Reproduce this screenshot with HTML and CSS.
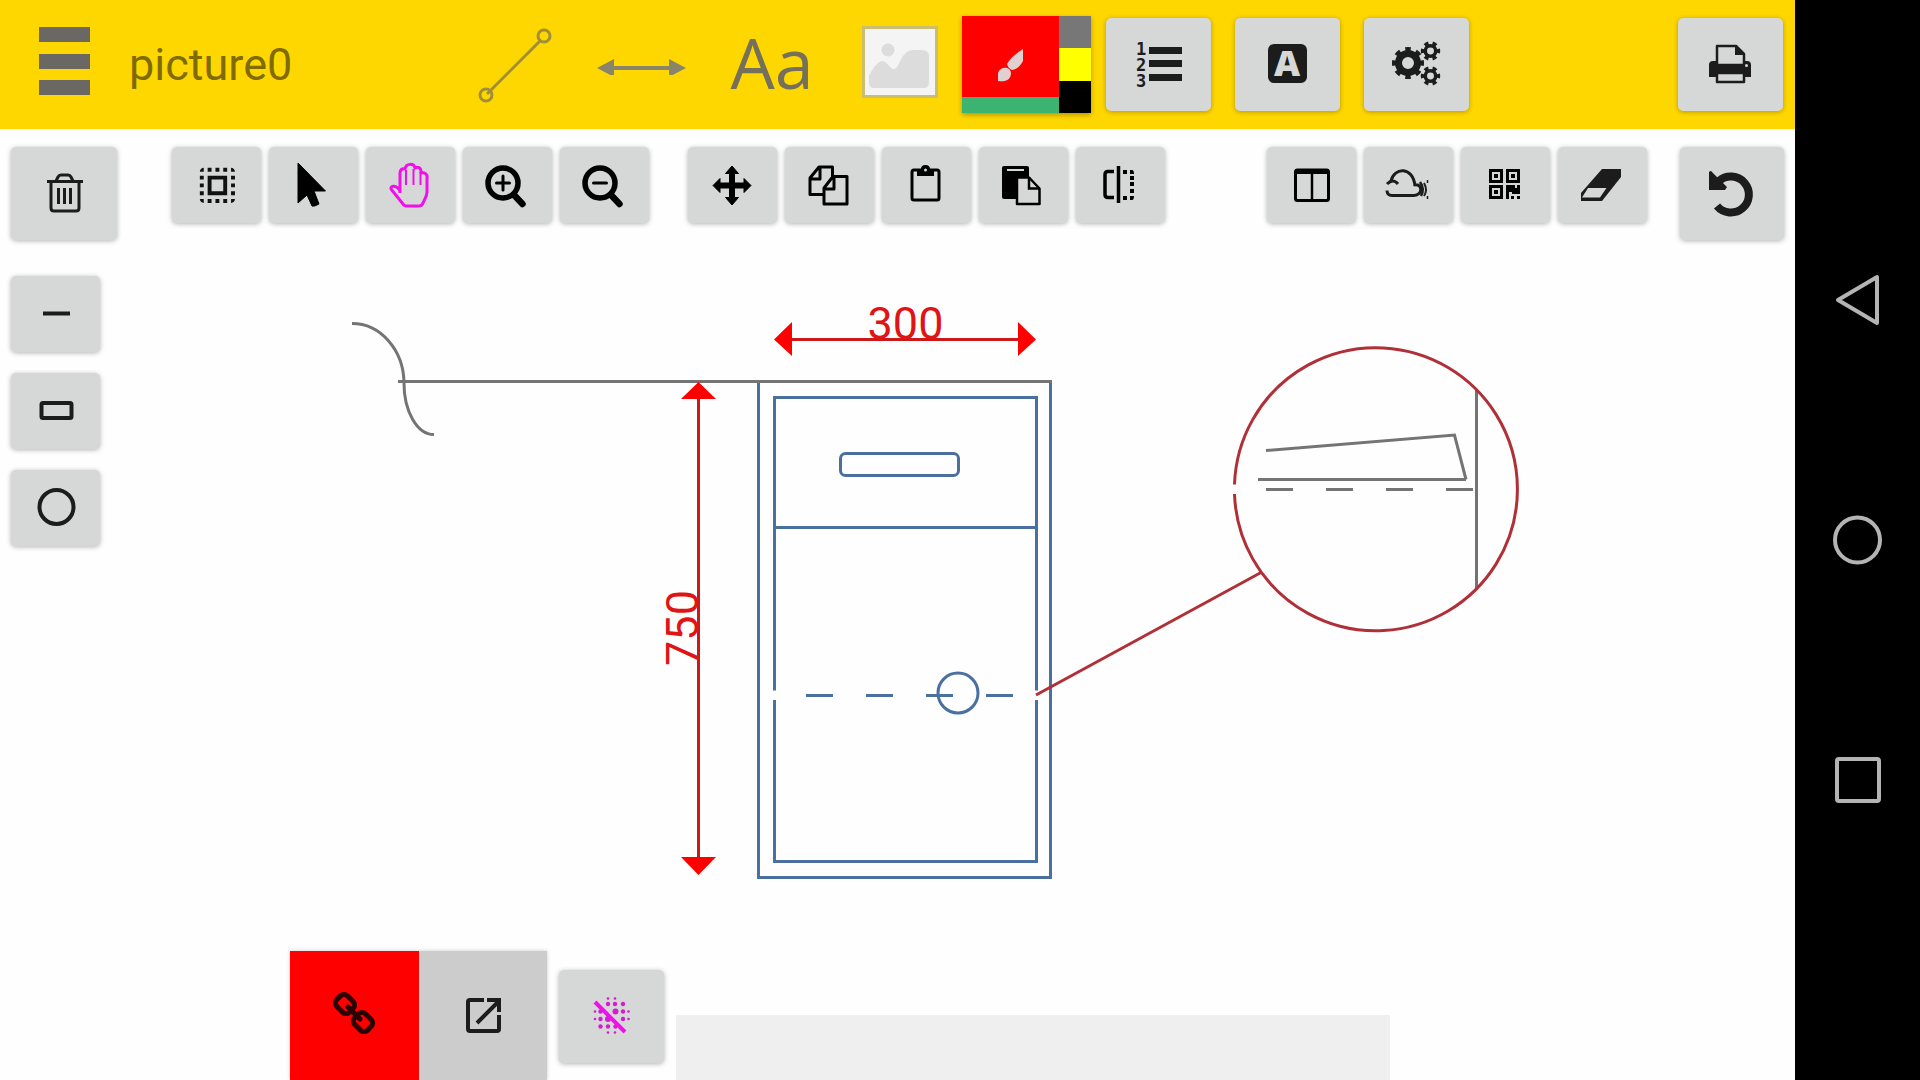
FILE: index.html
```
<!DOCTYPE html>
<html lang="en">
<head>
<meta charset="utf-8">
<title>picture0</title>
<link rel="stylesheet" href="styles.css">
</head>
<body>
<div class="app">
  <header class="header">
    <button class="plain menu" aria-label="Menu"><svg class="ico" width="52" height="70" viewBox="0 0 52 70"><path fill="#6b6863" d="M0 0h51v15H0zM0 27h51v15H0zM0 53h51v15H0z"/></svg></button>
    <h1 class="title">picture0</h1>
    <div class="modes">
      <button class="plain mode" aria-label="Line"><svg width="80" height="80" viewBox="0 0 80 80" fill="none" stroke="#a08e38" stroke-width="3"><circle cx="70" cy="11" r="6"/><circle cx="12" cy="70" r="6"/><path d="M67 15L13 69"/></svg></button>
      <button class="plain mode" aria-label="Dimension"><svg width="90" height="20" viewBox="0 0 90 20"><g transform="translate(0 3)"><path fill="#8a8468" d="M0 10L17 1v18zM89 10L72 1v18z"/><path stroke="#8a8468" stroke-width="4" d="M14 10h62"/></g></svg></button>
      <button class="plain mode aa">Aa</button>
      <button class="plain mode" aria-label="Image"><svg class="ico" width="80" height="72" viewBox="-4 0 80 72"><rect x="1.500" y="1.500" width="73" height="69" fill="#f4f4f4" stroke="#cbbd72" stroke-width="3"/><circle cx="26" cy="24" r="6.500" fill="#dcdcdc"/><path fill="#dcdcdc" d="M7 50C12 40 16 36 20 35c5 0 8 8 12 8 6 0 6-19 20-19h7q8 0 8 6v26q0 6-5 6H12q-5 0-5-6z"/></svg></button>
    </div>
    <div class="palette">
      <button class="plain brush" aria-label="Brush colour"><svg width="97" height="81" viewBox="0 0 97 81" fill="#e2cfcf"><path d="M61 33V45C58 51 53 54 50 54Q46 52 45 48C49 41 54 38 61 33z"/><path d="M36 65V57C37 53 41 51 45 52Q49 53 49 58C48 64 44 66 36 65z"/></svg></button>
      <div class="swatches"><button class="plain swatch gray" aria-label="Gray"></button><button class="plain swatch yellow" aria-label="Yellow"></button><button class="plain swatch black" aria-label="Black"></button></div>
    </div>
    <div class="actions">
      <button class="btn head" aria-label="Numbering"><svg width="105" height="93" viewBox="0 0 105 93" fill="#1c1c1c"><path d="M43 29h33v7H43zM43 42h33v7H43zM43 56h33v7H43z"/><g class="digits"><text x="30" y="37">1</text><text x="30" y="53">2</text><text x="30" y="69">3</text></g></svg></button>
      <button class="btn head" aria-label="Text style"><svg width="105" height="93" viewBox="0 0 105 93"><rect x="33" y="26" width="39" height="39" rx="6" fill="#1c1c1c"/><text class="letter" x="52" y="58" text-anchor="middle">A</text></svg></button>
      <button class="btn head" aria-label="Settings"><svg width="105" height="93" viewBox="0 0 105 93" fill="none" stroke="#1c1c1c"><circle cx="44" cy="45" r="9.500" stroke-width="7"/><circle cx="44" cy="45" r="13.500" stroke-width="5" pathLength="16" stroke-dasharray="1 1" stroke-dashoffset="0.500"/><circle cx="66.500" cy="33" r="5.200" stroke-width="3.500"/><circle cx="66.500" cy="33" r="7.700" stroke-width="4" pathLength="12" stroke-dasharray="1 1" stroke-dashoffset="0.500"/><circle cx="66.500" cy="58" r="5.200" stroke-width="3.500"/><circle cx="66.500" cy="58" r="7.700" stroke-width="4" pathLength="12" stroke-dasharray="1 1" stroke-dashoffset="0.500"/></svg></button>
    </div>
    <button class="btn head print" aria-label="Print"><svg width="105" height="93" viewBox="0 0 105 93"><path fill="#1c1c1c" d="M35 43h34q4 0 4 4v12H31V47q0-4 4-4z"/><path fill="#d6d8d7" stroke="#1c1c1c" stroke-width="2.500" stroke-linejoin="round" d="M39 47V28h19l8 8v11z"/><path fill="#1c1c1c" d="M57 27l10 10H57z"/><path fill="#d6d8d7" stroke="#1c1c1c" stroke-width="2.500" stroke-linejoin="round" d="M39 55h27v9H39z"/><circle cx="68.500" cy="47.500" r="1.500" fill="#d6d8d7"/></svg></button>
  </header>

  <main class="work">
    <div class="toolbar">
      <button class="btn trash" aria-label="Delete"><svg width="107" height="94" viewBox="0 0 107 94" fill="none" stroke="#1c1c1c" stroke-width="3"><path d="M37 35.500h36"/><path d="M46 35l2-4q1-2 3-2h7q2 0 3 2l2 4"/><path d="M41 36v26q0 3 3 3h22q3 0 3-3V36"/><path d="M48.500 42v16M54.500 42v16M60.500 42v16" stroke-width="3"/></svg></button>
      <div class="group">
        <button class="btn tool" aria-label="Select all"><svg width="90" height="78" viewBox="0 0 90 78"><path transform="translate(23 16) scale(1.950)" fill="#111" d="M3 5h2V3c-1.100 0-2 .9-2 2zm0 8h2v-2H3v2zm4 8h2v-2H7v2zM3 9h2V7H3v2zm10-6h-2v2h2V3zm6 0v2h2c0-1.100-.9-2-2-2zM5 21v-2H3c0 1.100.9 2 2 2zm-2-4h2v-2H3v2zM9 3H7v2h2V3zm2 18h2v-2h-2v2zm8-8h2v-2h-2v2zm0 8c1.100 0 2-.9 2-2h-2v2zm0-12h2V7h-2v2zm0 8h2v-2h-2v2zm-4 4h2v-2h-2v2zm0-16h2V3h-2v2zM7 17h10V7H7v10zm2-8h6v6H9V9z"/></svg></button>
        <button class="btn tool" aria-label="Pointer"><svg width="90" height="78" viewBox="0 0 90 78"><path stroke="#000" stroke-linejoin="round" d="M30 17v40l9-8 5 11q2 1 7-2l-5-13h11.500z"/></svg></button>
        <button class="btn tool" aria-label="Pan"><svg width="90" height="78" viewBox="0 0 90 78" fill="none" stroke="#f010ea" stroke-width="3"><path stroke-linejoin="round" d="M35 47V27c0-3 2-5 5-4 1-6 9-6 10-1 3-2 6 0 6 3v2c3-1 7 1 6 5v14c0 5-3 8-4 11q-1 3-4 3H42q-3 0-4-2L26 43c-1-4 6-4 9 2"/><path stroke-width="2" d="M41 24v15M48.500 23v16M55.500 26v13"/></svg></button>
        <button class="btn tool" aria-label="Zoom in"><svg width="90" height="78" viewBox="0 0 90 78" fill="none" stroke="#000"><circle cx="41" cy="37" r="15" stroke-width="5.500"/><path stroke-width="6.500" stroke-linecap="round" d="M53 50l7.500 8"/><path stroke-width="3" stroke-linecap="round" d="M34.500 37h13M41 30v14"/></svg></button>
        <button class="btn tool" aria-label="Zoom out"><svg width="90" height="78" viewBox="0 0 90 78" fill="none" stroke="#000"><circle cx="41" cy="37" r="15" stroke-width="5.500"/><path stroke-width="6.500" stroke-linecap="round" d="M53 50l7.500 8"/><path stroke-width="3" stroke-linecap="round" d="M34.500 37h13"/></svg></button>
      </div>
      <div class="group second">
        <button class="btn tool" aria-label="Move"><svg width="90" height="78" viewBox="0 0 90 78"><path stroke="#000" stroke-linejoin="round" d="M45 20l6.500 7.500H47.500v9.500H57v-4.500L64 39.500l-7 7V42h-9.500v9.500h4L45 59l-6.500-7.500h4V42H33v4.500l-7-7 7-7V37h9.500v-9.500h-4z"/></svg></button>
        <button class="btn tool" aria-label="Copy"><svg width="90" height="78" viewBox="0 0 90 78" fill="none" stroke="#000" stroke-width="3" stroke-linejoin="round"><path d="M39 48.500H26V32l9-11h13.500v10M36 21v12H26"/><path d="M49 30.500h14V58H40V42zM50 31v12H40"/></svg></button>
        <button class="btn tool" aria-label="Clipboard"><svg width="90" height="78" viewBox="0 0 90 78"><rect x="31" y="24" width="27" height="30" rx="2" fill="none" stroke="#000" stroke-width="3"/><path d="M36 23h4q0-4 4.500-4t4.500 4h4v7H36z"/><circle cx="44.500" cy="24" r="1.500" fill="#d6d8d7"/></svg></button>
        <button class="btn tool" aria-label="Paste"><svg width="90" height="78" viewBox="0 0 90 78"><rect x="24" y="20" width="27" height="33" rx="2"/><path stroke="#d6d8d7" stroke-width="2" d="M29 24h17"/><path fill="#d6d8d7" stroke="#000" stroke-width="2.500" stroke-linejoin="round" d="M39 31.500h12l10.500 11V58H39z"/><path fill="none" stroke="#000" stroke-width="2.500" d="M51 31v11.500h10"/></svg></button>
        <button class="btn tool" aria-label="Mirror"><svg width="90" height="78" viewBox="0 0 90 78"><path fill="none" stroke="#000" stroke-width="3.500" d="M39 25.500h-6q-3 0-3 3v20q0 3 3 3h6M43.500 20v37"/><path d="M48 24h4v4h-4zM55 24h2q2 0 2 4h-4zM55 30h4v4h-4zM55 36h4v4h-4zM55 43h4v4h-4zM48 50h4v4h-4zM55 50h4q0 4-2 4h-2z"/></svg></button>
      </div>
      <div class="group third">
        <button class="btn tool" aria-label="Columns"><svg width="90" height="78" viewBox="0 0 90 78"><rect x="29.500" y="24" width="33" height="30.500" rx="2" fill="none" stroke="#000" stroke-width="3"/><path d="M29 23h34v5H29z"/><path stroke="#000" stroke-width="2.500" d="M46 27v27"/></svg></button>
        <button class="btn tool" aria-label="Cloud"><svg width="90" height="78" viewBox="0 0 90 78" fill="none" stroke="#1c1c1c" stroke-width="3"><path d="M24 38q6-6 11 0M28 35C31 21 50 20 52 40M51 39c9-2 9 10 0 10.500H29q-5 0-5-5"/><path d="M57 36q5 7 1 14" stroke-width="2.500"/><path d="M61 37q4 7 0 13" stroke-width="2"/><path d="M64.500 34v3M64.500 50v3" stroke-width="1.500"/></svg></button>
        <button class="btn tool" aria-label="QR code"><svg width="90" height="78" viewBox="0 0 90 78"><path fill-rule="evenodd" d="M29 23h14v14H29zM32 26v8h8v-8zM46 23h14v14H46zM49 26v8h8v-8zM29 39h14v14H29zM32 42v8h8v-8zM34 28h4v4h-4zM51 28h4v4h-4zM34 44h4v4h-4zM46 39h9v3h2v-3h3v9h-8v-2h-3v7h-3zM51 50h3v3h-3zM57 50h3v3h-3z"/></svg></button>
        <button class="btn tool" aria-label="Eraser"><svg width="90" height="78" viewBox="0 0 90 78"><path fill="#1c1c1c" d="M45 23h19v8L45 55H24v-8z"/><path fill="#d6d8d7" d="M31 42h18.500L43 51.500H25z"/></svg></button>
      </div>
      <button class="btn undo" aria-label="Undo"><svg width="105" height="94" viewBox="0 0 105 94"><path fill="none" stroke="#1c1c1c" stroke-width="8" d="M40 35A18 18 0 1 1 38 60"/><path fill="#1c1c1c" d="M30 26q2-2 3 0l15 15-2 3H30z"/></svg></button>
    </div>

    <div class="middle">
      <div class="shapes">
        <button class="btn tool" aria-label="Draw line"><svg width="90" height="78" viewBox="0 0 90 78"><path stroke="#1c1c1c" stroke-width="4" d="M33 38.500h27"/></svg></button>
        <button class="btn tool" aria-label="Draw rectangle"><svg width="90" height="78" viewBox="0 0 90 78"><rect x="31.500" y="31" width="30" height="15" rx="1.500" fill="none" stroke="#1c1c1c" stroke-width="4"/></svg></button>
        <button class="btn tool" aria-label="Draw circle"><svg width="90" height="78" viewBox="0 0 90 78"><circle cx="46.500" cy="38" r="17" fill="none" stroke="#1c1c1c" stroke-width="4"/></svg></button>
      </div>
      <svg class="drawing" viewBox="100 240 1695 711" preserveAspectRatio="xMinYMin meet" fill="none" stroke-width="3">
        <g stroke="#4a70a0">
          <path d="M758.500 380v497.500h292V380"/>
          <path d="M774.500 690.500v-293h262v293M774.500 700v161.500h262V700M774.500 527.500h262"/>
          <rect x="840.500" y="453.500" width="118" height="22" rx="5"/>
          <path d="M806 695.500h27M866 695.500h27M926 695.500h27M986 695.500h27"/>
          <circle cx="958" cy="693" r="20"/>
        </g>
        <g stroke="#747474">
          <path d="M398 381.500h654"/>
          <path d="M352 323.500A52 60 0 0 1 404 383A30 51 0 0 0 434 434.500"/>
          <path d="M1266 450.500L1454.500 435L1466 479.500M1258 479.500h208M1476.500 389v201"/>
          <path d="M1266 489.500h27M1326 489.500h27M1386 489.500h27M1446 489.500h27"/>
        </g>
        <g stroke="#b03038">
          <path d="M1234.500 484.500A141.500 141.500 0 1 1 1234.500 494"/>
          <path d="M1036 695L1261 572.500"/>
        </g>
        <g stroke="#cc1818"><path d="M780 339.500h250M698.500 390v478"/></g>
        <path fill="#f00" d="M774 339.500L792 322v34zM1036 339.500L1018 322v34zM698.500 382L681 399h35zM698.500 875L681 857h35z"/>
        <g class="measure"><text x="905.500" y="339" text-anchor="middle">300</text><text transform="translate(698 628) rotate(-90)" text-anchor="middle">750</text></g>
      </svg>
    </div>

    <footer class="bottom">
      <div class="joined">
        <button class="plain link" aria-label="Link"><svg width="129" height="129" viewBox="0 0 129 129" fill="none" stroke="#2c0000" stroke-width="5"><rect x="46" y="45.500" width="18" height="15" rx="5" transform="rotate(45 55 53)"/><rect x="64" y="63.500" width="18" height="15" rx="5" transform="rotate(45 73 71)"/><path stroke-linecap="round" d="M58 56l12 12"/></svg></button>
        <button class="plain open" aria-label="Open"><svg width="128" height="129" viewBox="0 0 128 129" fill="none" stroke="#1c1c1c" stroke-width="4"><path d="M65 49H51q-2 0-2 2v27q0 2 2 2h27q2 0 2-2V64M58 72l21-21M68 49h12v12"/></svg></button>
      </div>
      <button class="btn blur" aria-label="Blur off"><svg width="106" height="94" viewBox="0 0 106 94"><g fill="#d41cd0"><circle cx="50" cy="29.500" r="1.300"/><circle cx="57" cy="29.500" r="1.300"/><circle cx="50" cy="35" r="2.200"/><circle cx="57" cy="35" r="2.200"/><circle cx="65" cy="35" r="2.200"/><circle cx="37" cy="42.500" r="1.300"/><circle cx="42.500" cy="42.500" r="2.200"/><circle cx="57.500" cy="42.500" r="3"/><circle cx="65" cy="42.500" r="2.200"/><circle cx="70.500" cy="42.500" r="1.300"/><circle cx="37" cy="50" r="1.300"/><circle cx="42.500" cy="50" r="2.200"/><circle cx="50" cy="50" r="3"/><circle cx="65" cy="50" r="2.200"/><circle cx="70.500" cy="50" r="1.300"/><circle cx="42.500" cy="57.500" r="2.200"/><circle cx="50" cy="57.500" r="2.200"/><circle cx="57.500" cy="57.500" r="2.200"/><circle cx="50" cy="63.500" r="1.300"/><circle cx="57" cy="63.500" r="1.300"/></g><path stroke="#f010ea" stroke-width="4" d="M37 33l30 30"/></svg></button>
      <div class="status"></div>
    </footer>
  </main>
</div>
<nav class="system">
  <button class="plain key" aria-label="Back"><svg width="50" height="54" viewBox="0 0 50 54" fill="none" stroke="#b4b4b4" stroke-width="4" stroke-linejoin="round"><path d="M5 27L44 4v46z"/></svg></button>
  <button class="plain key" aria-label="Home"><svg width="50" height="50" viewBox="0 0 50 50" fill="none" stroke="#b4b4b4" stroke-width="4"><circle cx="24.500" cy="25" r="22.500"/></svg></button>
  <button class="plain key" aria-label="Recent apps"><svg width="46" height="46" viewBox="0 0 46 46" fill="none" stroke="#b4b4b4" stroke-width="4"><rect x="2" y="2" width="42" height="42" rx="2"/></svg></button>
</nav>
</body>
</html>
```
FILE: styles.css
```
* { box-sizing: border-box; }

body {
  margin: 0;
  display: flex;
  min-height: 100vh;
  background: #fefefe;
  font-family: Roboto, "Noto Sans", sans-serif;
}

svg { display: block; }

button {
  padding: 0;
  border: 0;
  font: inherit;
  cursor: pointer;
  flex: none;
  display: flex;
  align-items: center;
  justify-content: center;
}

.app { flex: 1; min-width: 0; display: flex; flex-direction: column; }

.plain { background: none; }

.btn {
  background: #d6d8d7;
  border-radius: 5px;
  box-shadow: 0 1px 5px rgba(0, 0, 0, 0.3);
}

/* Header */
.header {
  display: flex;
  align-items: center;
  height: 129px;
  padding-right: 12px;
  background: #ffd700;
}

.menu { width: 129px; height: 129px; }
.ico { margin-bottom: 6px; }

.title {
  flex: 0 1 321px;
  margin: 0;
  color: #7f6b00;
  font-size: 45px;
  font-weight: 400;
}

.modes { display: flex; }
.mode { width: 128px; height: 129px; }

.aa {
  padding: 0 0 6px 4px;
  color: #75705a;
  font-family: "Open Sans", sans-serif;
  font-size: 70px;
  font-weight: 500;
}

.palette {
  display: flex;
  height: 97px;
  box-shadow: 0 2px 5px rgba(0, 0, 0, 0.3);
}

.brush {
  width: 97px;
  align-items: flex-start;
  background: #f00;
  border-bottom: 16px solid #3cb371;
}

.swatches { width: 32px; display: flex; flex-direction: column; }
.swatch { flex: 1; }
.gray { background: #777; }
.yellow { background: #ff0; }
.black { background: #000; }

.actions { display: flex; gap: 24px; margin-left: 15px; }
.head { width: 105px; height: 93px; }
.print { margin-left: auto; }

.digits { font: bold 17px "DejaVu Sans Mono", monospace; }
.letter { font: 800 36px "Open Sans", sans-serif; fill: #d6d8d7; }

/* Workspace */
.work { flex: 1; display: flex; flex-direction: column; }

.toolbar {
  display: flex;
  align-items: flex-start;
  padding: 18px 11px 0;
}

.trash, .tool, .undo, .blur {
  align-items: flex-start;
  justify-content: flex-start;
}

.trash svg, .tool svg, .undo svg, .blur svg { margin: -1px 0 0 -1px; }

.trash { width: 106px; height: 93px; margin-right: 55px; }
.group { display: flex; gap: 8px; }
.second { margin-left: 39px; }
.third { margin-left: auto; }
.tool { width: 89px; height: 76px; }
.undo { width: 104px; height: 93px; margin-left: 33px; }

.middle { flex: 1; display: flex; align-items: flex-start; padding-left: 11px; }
.shapes { display: flex; flex-direction: column; gap: 21px; padding-top: 36px; }
.drawing { flex: 1; min-width: 0; }
.measure { font-size: 45px; fill: #e01414; stroke: none; }

/* Bottom bar */
.bottom { display: flex; align-items: flex-end; padding-left: 290px; }
.joined { display: flex; box-shadow: 0 0 4px rgba(0, 0, 0, 0.2); }
.link { background: #f00; }
.open { background: #ccc; }
.blur { width: 105px; height: 93px; margin: 0 12px 17px; }
.status { flex: 0 1 714px; height: 65px; background: #efefef; }

/* System navigation */
.system {
  width: 125px;
  background: #000;
  display: flex;
  flex-direction: column;
  align-items: center;
  justify-content: center;
}

.key { width: 125px; height: 240px; }
```
